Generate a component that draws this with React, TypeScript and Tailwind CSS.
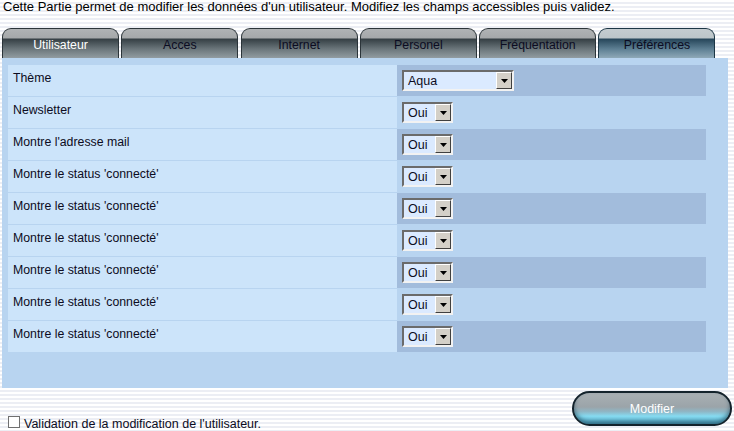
const tabs = ['Utilisateur', 'Acces', 'Internet', 'Personel', 'Fréquentation', 'Préférences']

const rows = [
  { label: 'Thème', value: 'Aqua', wide: true },
  { label: 'Newsletter', value: 'Oui' },
  { label: "Montre l'adresse mail", value: 'Oui' },
  { label: "Montre le status 'connecté'", value: 'Oui' },
  { label: "Montre le status 'connecté'", value: 'Oui' },
  { label: "Montre le status 'connecté'", value: 'Oui' },
  { label: "Montre le status 'connecté'", value: 'Oui' },
  { label: "Montre le status 'connecté'", value: 'Oui' },
  { label: "Montre le status 'connecté'", value: 'Oui' },
]

function Tab({ label, index }: { label: string; index: number }) {
  const active = index === 5
  const first = index === 0
  return (
    <div
      className={
        'relative h-[30px] w-[117px] rounded-t-[9px] border border-b-0 flex items-center justify-center pt-[3px] ' +
        (active
          ? 'border-[#1c3645] bg-[linear-gradient(180deg,#c4ccd0_0px,#bcc5c9_9px,#26465a_10px,#5d7f93_20px,#8fa9b8_29px)]'
          : 'border-[#2b3439] bg-[linear-gradient(180deg,#b0b3b5_0px,#a5a8aa_9px,#353f44_10px,#6b767b_20px,#929ca1_29px)]')
      }
    >
      <span className={'text-[12.3px] leading-[14px] ' + (first ? 'text-white' : 'text-[#0c0c22]')}>{label}</span>
    </div>
  )
}

function Select({ value, wide }: { value: string; wide?: boolean }) {
  return (
    <div
      className={
        'h-[21px] flex border-2 border-t-[#6b6b6b] border-l-[#6b6b6b] border-b-[#f2f2f2] border-r-[#f2f2f2] bg-[#dbeaff] ' +
        (wide ? 'w-[112px]' : 'w-[51px]')
      }
    >
      <span className="flex-1 pl-[4px] pt-[1px] text-[12.5px] leading-[17px] text-[#0c0c22]">{value}</span>
      <span className="w-[16px] h-[17px] bg-[#d4d0c8] border border-t-white border-l-white border-b-[#404040] border-r-[#404040] flex items-center justify-center">
        <svg width="7" height="4" viewBox="0 0 7 4">
          <path d="M0 0H7L3.5 4Z" fill="#000" />
        </svg>
      </span>
    </div>
  )
}

export default function App() {
  return (
    <div
      className="w-[734px] h-[431px] overflow-hidden bg-[repeating-linear-gradient(180deg,#ffffff_0px,#ffffff_2px,#eceef4_2px,#eceef4_4px)] text-black"
      style={{ fontFamily: '"Liberation Sans", Arial, sans-serif' }}
    >
      <p className="pl-[3px] text-[13px] leading-[14px]">
        Cette Partie permet de modifier les données d'un utilisateur. Modifiez les champs accessibles puis validez.
      </p>

      <div className="mt-[14px] ml-[2px] flex gap-[2.3px]">
        {tabs.map((t, i) => (
          <Tab key={t} label={t} index={i} />
        ))}
      </div>

      <div className="ml-[2px] w-[726px] h-[330px] bg-[#b8d4f0] pt-[7px] pl-[6px]">
        <div className="flex flex-col gap-[1px] w-[698px]">
          {rows.map((r, i) => (
            <div key={i} className="flex h-[31px]">
              <div className="w-[389px] bg-[#cce4fa] pl-[5px] pt-[6px] text-[12.3px] leading-[14px] text-[#0c0c22]">
                {r.label}
              </div>
              <div className={'flex-1 pt-[5px] pl-[5px] ' + (i % 2 === 0 ? 'bg-[#a2bcdc]' : 'bg-[#b8d4f0]')}>
                <Select value={r.value} wide={r.wide} />
              </div>
            </div>
          ))}
        </div>
      </div>

      <div className="flex items-start">
        <label className="mt-[28px] ml-[8px] flex items-start gap-[4px] text-[12.5px] leading-[14px] text-[#0c0c22]">
          <span className="w-[12px] h-[12px] border border-[#707070] bg-white" />
          <span className="mt-[1px]">Validation de la modification de l'utilisateur.</span>
        </label>
        <button className="ml-auto mr-[2px] mt-[3px] w-[160px] h-[35px] rounded-full border-2 border-[#14232c] bg-[linear-gradient(180deg,#a9b0b4_0%,#9ba4a9_45%,#8fb6c5_60%,#86dcf2_75%,#5ab2cf_100%)] shadow-[inset_0_-3px_4px_rgba(20,60,80,0.6)] text-white text-[12.5px] leading-[14px] flex items-center justify-center pt-[1px]">
          Modifier
        </button>
      </div>
    </div>
  )
}
